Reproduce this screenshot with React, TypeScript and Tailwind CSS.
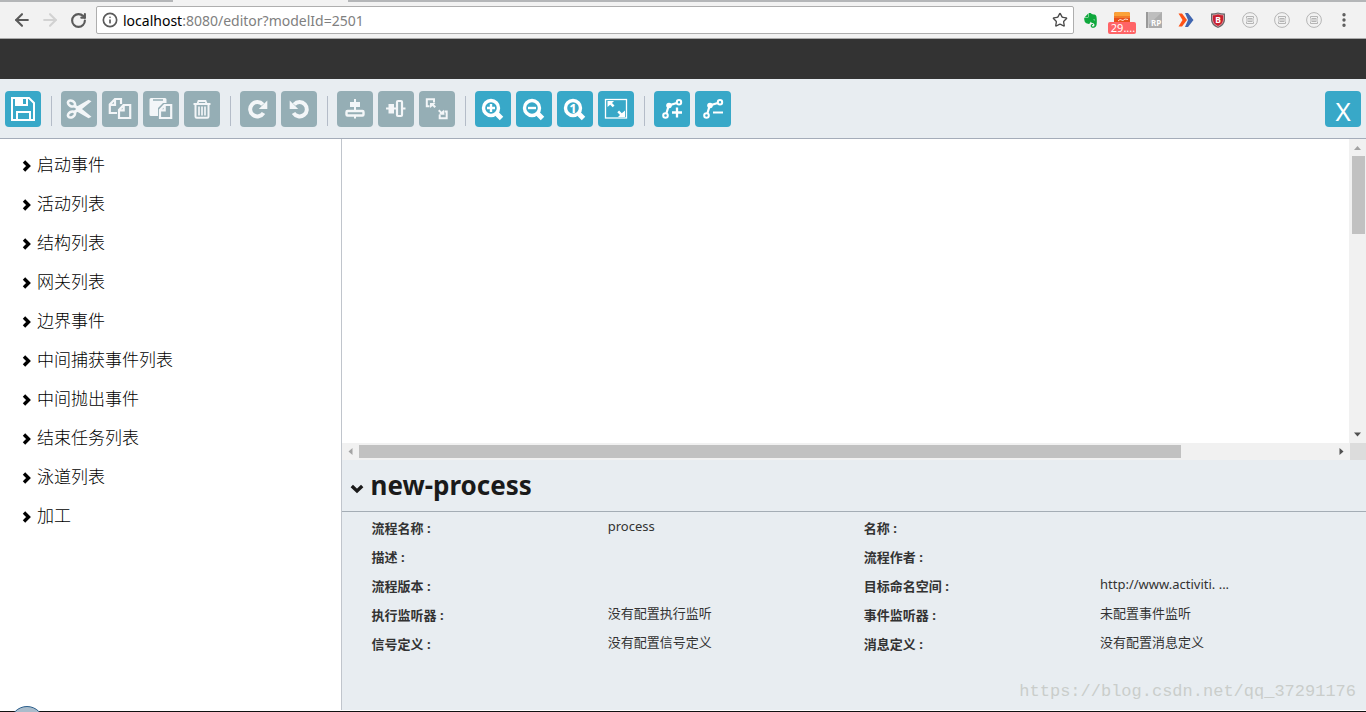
import React, { useState } from 'react';
import { FaEvernote } from 'react-icons/fa';
import { ArrowLeft, ArrowRight, Info, MoreVertical, RotateCw, Star } from 'lucide-react';

type Tool = {
  name: string;
  label: string;
  enabled?: boolean;
  icon: React.ReactNode;
};

type Property = {
  label: string;
  value: string;
};

const PALETTE = [
  '启动事件',
  '活动列表',
  '结构列表',
  '网关列表',
  '边界事件',
  '中间捕获事件列表',
  '中间抛出事件',
  '结束任务列表',
  '泳道列表',
  '加工',
];

const PROPERTIES: Property[] = [
  { label: '流程名称', value: 'process' },
  { label: '名称', value: '' },
  { label: '描述', value: '' },
  { label: '流程作者', value: '' },
  { label: '流程版本', value: '' },
  { label: '目标命名空间', value: 'http://www.activiti. ...' },
  { label: '执行监听器', value: '没有配置执行监听' },
  { label: '事件监听器', value: '未配置事件监听' },
  { label: '信号定义', value: '没有配置信号定义' },
  { label: '消息定义', value: '没有配置消息定义' },
];

const repeatIcon = (
  <>
    <path d="M23.5 22A7.2 7.200 0 1 1 22.800 13.500" strokeWidth="4" />
    <path d="M27.300 9.500v8.500h-8.500z" fill="currentColor" stroke="none" />
  </>
);

const magnifier = (
  <>
    <circle cx="16" cy="17" r="7.5" strokeWidth="3.4" />
    <path d="M21.5 22.5l5 5" strokeWidth="5" />
  </>
);

const bendLine = (
  <>
    <circle cx="11.5" cy="24.5" r="2.3" />
    <path d="M12.5 22l2.3-7.5 8-2.5" strokeWidth="2.2" />
    <circle cx="15" cy="14.5" r="2.8" fill="currentColor" stroke="none" />
    <circle cx="25" cy="11.3" r="2.2" />
  </>
);

// All glyphs are drawn on the 36px button grid
const TOOL_GROUPS: Tool[][] = [
  [
    {
      name: 'save',
      label: '保存',
      enabled: true,
      icon: (
        <>
          <path d="M7 7h17l5 5v17H7z" />
          <path d="M10 6h13v9H10zM18 8v5h3V8z" fill="currentColor" fillRule="evenodd" stroke="none" />
          <path d="M12 29v-8h13v8" />
        </>
      ),
    },
  ],
  [
    {
      name: 'cut',
      label: '剪切',
      icon: (
        <>
          <ellipse cx="10.5" cy="12.5" rx="3.8" ry="2.7" strokeWidth="2.6" transform="rotate(30 10.5 12.5)" />
          <ellipse cx="10.5" cy="23.5" rx="3.8" ry="2.7" strokeWidth="2.6" transform="rotate(-30 10.5 23.5)" />
          <path d="M13 14.500l5 3.500-5 3.500" strokeWidth="3" />
          <path d="M15 16L27.5 8.800l3 1.500L21 18l9.500 7.700-3 1.500L15 20z" fill="currentColor" stroke="none" />
        </>
      ),
    },
    {
      name: 'copy',
      label: '复制',
      icon: (
        <>
          <path d="M15 22H7.800v-8.500L13 8h6v5M7.800 13.800H13V8" strokeWidth="2.200" />
          <path d="M21.5 14h6.700v13H17v-8zM17 19.300h4.700V14" strokeWidth="2.200" />
        </>
      ),
    },
    {
      name: 'paste',
      label: '粘贴',
      icon: (
        <>
          <path
            d="M8 7h14a1.500 1.500 0 0 1 1.500 1.500V12H20l-5 5v8H8a1.500 1.500 0 0 1-1.500-1.500v-15A1.500 1.500 0 0 1 8 7zM10 8.200v1.600h10V8.200z"
            fill="currentColor"
            fillRule="evenodd"
            stroke="none"
          />
          <path d="M21.5 14h6.700v13H17v-8zM17 19.300h4.700V14" strokeWidth="2.200" />
        </>
      ),
    },
    {
      name: 'delete',
      label: '删除',
      icon: (
        <>
          <path d="M9.500 13h17M11.500 13v12.500a1.200 1.200 0 0 0 1.200 1.200h10.600a1.200 1.200 0 0 0 1.200-1.200V13" strokeWidth="2" />
          <path d="M13.500 12.500l1-2.500h7l1 2.500" strokeWidth="1.800" />
          <path d="M15 15.500v9M18 15.500v9M21 15.500v9" strokeWidth="1.700" />
        </>
      ),
    },
  ],
  [
    { name: 'redo', label: '重做', icon: repeatIcon },
    { name: 'undo', label: '撤销', icon: <g transform="matrix(-1 0 0 1 36 0)">{repeatIcon}</g> },
  ],
  [
    {
      name: 'align-vertical',
      label: '垂直对齐',
      icon: (
        <>
          <path d="M18 8v11M18 25v2.500" />
          <path d="M13 11h10v5H13z" fill="currentColor" stroke="none" />
          <rect x="9.500" y="20" width="17" height="4.500" rx="1" strokeWidth="2.400" />
        </>
      ),
    },
    {
      name: 'align-horizontal',
      label: '水平对齐',
      icon: (
        <>
          <path d="M8 17.500h10M25 17.500h2.500" />
          <path d="M10.500 13h5.500v9.500h-5.500z" fill="currentColor" stroke="none" />
          <rect x="19" y="10" width="5" height="15" rx="1" strokeWidth="2.200" />
        </>
      ),
    },
    {
      name: 'same-size',
      label: '相同大小',
      icon: (
        <>
          <path d="M10.500 15.300H7.800V8.300h7.200v3.200" strokeWidth="2" />
          <path d="M11 12h5.500l-1.500 1.500 2 2-1.500 1.500-2-2-2.500 2z" fill="currentColor" stroke="none" />
          <path d="M25.500 20.500h2.200v6.700h-7V24" strokeWidth="2" />
          <path d="M25.500 23.800h-6l1.700-1.700-2.200-2.200 1.400-1.400 2.200 2.200 2.200-2z" fill="currentColor" stroke="none" />
        </>
      ),
    },
  ],
  [
    {
      name: 'zoom-in',
      label: '放大',
      enabled: true,
      icon: (
        <>
          {magnifier}
          <path d="M12 17h8M16 13v8" strokeWidth="2.400" />
        </>
      ),
    },
    {
      name: 'zoom-out',
      label: '缩小',
      enabled: true,
      icon: (
        <>
          {magnifier}
          <path d="M12 17h8" strokeWidth="2.400" />
        </>
      ),
    },
    {
      name: 'zoom-actual',
      label: '实际大小',
      enabled: true,
      icon: (
        <>
          {magnifier}
          <text x="16" y="21.500" textAnchor="middle" fontSize="13" fontWeight="700" fill="currentColor" stroke="none">
            1
          </text>
        </>
      ),
    },
    {
      name: 'zoom-fit',
      label: '适合大小',
      enabled: true,
      icon: (
        <>
          <rect x="7.500" y="8.500" width="21" height="18.500" strokeWidth="1.300" />
          <path d="M9.500 10h6.500l-2 2 2.500 2.500-1.800 1.800-2.500-2.500-2.700 2.200z" fill="currentColor" stroke="none" />
          <path d="M27 26h-7l2-2-2.700-2.700 1.800-1.800 2.700 2.700L27 19.500z" fill="currentColor" stroke="none" />
        </>
      ),
    },
  ],
  [
    {
      name: 'bend-add',
      label: '添加弯曲点',
      enabled: true,
      icon: (
        <>
          {bendLine}
          <path d="M18 21.500h10M23 16.500v10" strokeWidth="2.300" />
        </>
      ),
    },
    {
      name: 'bend-remove',
      label: '移除弯曲点',
      enabled: true,
      icon: (
        <>
          {bendLine}
          <path d="M18 21.500h10" strokeWidth="2" />
        </>
      ),
    },
  ],
];

function ExtensionIcons() {
  return (
    <div className="flex items-center">
      <button type="button" aria-label="Evernote" className="flex w-8 justify-center">
        <FaEvernote className="size-[17px] text-[#0fa83c]" />
      </button>
      <button type="button" aria-label="Weather" className="relative flex h-7 w-8 justify-center">
        <svg viewBox="0 0 16 16" className="mt-1.5 size-4">
          <rect width="16" height="16" rx="2" fill="#e8501c" />
          <path d="M0 2a2 2 0 0 1 2-2h12a2 2 0 0 1 2 2v2H0z" fill="#fba238" />
          <path d="M0 4h16v2H0z" fill="#f27a28" />
          <path d="M4 9l2-1.500 3 1 2-1.500 3 .5" stroke="#ffe3d0" fill="none" />
        </svg>
        <span className="absolute top-4 left-0.5 h-3 w-7 rounded-xs bg-[#ff6467] pl-0.5 text-[11px] leading-3 text-white">
          29....
        </span>
      </button>
      <button type="button" aria-label="RP" className="flex w-8 justify-center">
        <svg viewBox="0 0 16 16" className="size-4">
          <path d="M0 0h2v16H0z" fill="#999" />
          <path d="M2.500 0H16v16H2.500z" fill="#adadad" />
          <path d="M2.500 0H16L2.500 13z" fill="#bebebe" />
          <text x="5" y="14" fontSize="8" fontWeight="700" fill="#fff">RP</text>
        </svg>
      </button>
      <button type="button" aria-label="Forward" className="flex w-8 justify-center">
        <svg viewBox="0 0 16 16" className="size-4">
          <path d="M7 1h3l5.500 7L10 15H7l3-7z" fill="#4166b0" />
          <path d="M.5 1.500H4L9 8l-5 6.500H.5L4.500 8z" fill="#ff5217" />
        </svg>
      </button>
      <button type="button" aria-label="Shield" className="flex w-8 justify-center">
        <svg viewBox="0 0 16 16" className="size-4">
          <path d="M1 1.500Q5 1.500 8 .5q3 1 7 1v6.500q0 5-7 8Q1 13 1 8z" fill="#68696c" />
          <path d="M2.500 3Q5 3 8 2q3 1 5.500 1v5q0 4-5.500 6.500Q2.500 12 2.500 8z" fill="#c8202f" stroke="#e9c5c8" strokeWidth=".6" />
          <text x="8" y="11" textAnchor="middle" fontSize="8.500" fontWeight="700" fill="#fff">B</text>
        </svg>
      </button>
      {[1, 2, 3].map((n) => (
        <button key={n} type="button" aria-label={`Extension ${n}`} className="flex w-8 justify-center">
          <svg viewBox="0 0 16 16" className="size-4" fill="none" stroke="#b5b5b5">
            <circle cx="8" cy="8" r="7.400" />
            <path d="M4.500 6.500V4.500h7v2M4.500 9.500v2h7v-2M4 8h8M5.500 6.500h5M5.500 9.500h5" />
          </svg>
        </button>
      ))}
      <button type="button" aria-label="Menu" className="flex w-7 justify-center">
        <MoreVertical className="size-[18px] text-[#5a5a5a]" strokeWidth={2.5} />
      </button>
    </div>
  );
}

function BrowserBar() {
  return (
    <header className="border-b border-[#a9a9a9] bg-[#f2f2f2]">
      <div className="flex h-0.5">
        <span className="w-[173px] bg-[#b4b6b8]" />
        <span className="w-[175px]" />
        <span className="flex-1 bg-[#b4b6b8]" />
      </div>
      <div className="flex h-9 items-center pr-2 pl-3">
        <div className="flex w-[84px] gap-2 text-[#5a5a5a]">
          <button type="button" aria-label="Back">
            <ArrowLeft className="size-5" strokeWidth={2.5} />
          </button>
          <button type="button" aria-label="Forward" disabled className="text-[#d2d2d2]">
            <ArrowRight className="size-5" strokeWidth={2.5} />
          </button>
          <button type="button" aria-label="Reload" className="flex size-5 items-center justify-center">
            <RotateCw className="size-[17px]" strokeWidth={3} />
          </button>
        </div>
        <div className="flex h-7 flex-1 items-center gap-[5px] rounded-xs border border-[#aeaeae] bg-white px-[5px]">
          <Info className="size-4 text-[#5a5a5a]" strokeWidth={2.5} />
          <span className="flex-1 text-[14px] text-[#808080]">
            <span className="text-black">localhost</span>:8080/editor?modelId=2501
          </span>
          <button type="button" aria-label="Bookmark">
            <Star className="size-4 text-[#4a4a4a]" />
          </button>
        </div>
        <ExtensionIcons />
      </div>
    </header>
  );
}

function Toolbar() {
  return (
    <div className="flex items-center justify-between border-b border-[#a4acb9] bg-[#e8edf1] px-[5px] pt-3 pb-[11px]">
      <div className="flex items-center">
        {TOOL_GROUPS.map((group, i) => (
          <React.Fragment key={i}>
            {i > 0 && <span className="mt-1 mr-[9px] ml-2.5 h-[30px] w-px bg-[#b4bcc8]" />}
            <div className="flex gap-[5px]">
              {group.map((tool) => (
                <button
                  key={tool.name}
                  type="button"
                  aria-label={tool.label}
                  disabled={!tool.enabled}
                  className={
                    tool.enabled
                      ? 'size-9 rounded bg-[#38a8c8] text-white'
                      : 'size-9 rounded bg-[#95aeb5] text-[#f3f6f8]'
                  }
                >
                  <svg viewBox="0 0 36 36" className="size-9" fill="none" stroke="currentColor" strokeWidth="2">
                    {tool.icon}
                  </svg>
                </button>
              ))}
            </div>
          </React.Fragment>
        ))}
      </div>
      <button type="button" className="size-9 rounded bg-[#38a8c8] pt-1 text-[26px] leading-8 text-white">
        X
      </button>
    </div>
  );
}

function Palette() {
  return (
    <nav className="w-1/4 shrink-0 border-r border-[#c0c5cc] bg-white pt-1.5">
      <ul>
        {PALETTE.map((item) => (
          <li key={item}>
            <button type="button" className="flex h-[39px] items-center gap-[5px] pl-[22px] text-[17px] font-light text-black">
              <svg viewBox="0 0 10 12" className="mt-0.5 h-3 w-2.5" fill="none" stroke="currentColor" strokeWidth="3.400">
                <path d="M2 1.500L6.500 6 2 10.500" />
              </svg>
              {item}
            </button>
          </li>
        ))}
      </ul>
    </nav>
  );
}

function Canvas() {
  return (
    <div className="flex min-h-0 flex-1 flex-col bg-white">
      <div className="flex flex-1 justify-end">
        <div className="flex w-[17px] flex-col items-end bg-[#f1f1f1] pr-px">
          <svg viewBox="0 0 15 17" className="h-[17px] w-[15px]">
            <path d="M4 11h7L7.500 7z" fill="#a3a3a3" />
          </svg>
          <div className="h-[78px] w-[13px] bg-[#c1c1c1]" />
          <svg viewBox="0 0 15 17" className="mt-auto h-[17px] w-[15px]">
            <path d="M4 6.500h7l-3.500 4z" fill="#505050" />
          </svg>
        </div>
      </div>
      <div className="flex h-[17px] items-center bg-[#f1f1f1]">
        <svg viewBox="0 0 17 17" className="size-[17px]">
          <path d="M10.500 5v7L6.500 8.500z" fill="#a3a3a3" />
        </svg>
        <div className="flex-1">
          <div className="h-[13px] w-27/32 bg-[#c1c1c1]" />
        </div>
        <svg viewBox="0 0 17 17" className="size-[17px]">
          <path d="M6.500 5v7l4-3.500z" fill="#505050" />
        </svg>
        <div className="h-full w-4 bg-[#dcdcdc]" />
      </div>
    </div>
  );
}

function Properties() {
  const [open, setOpen] = useState(true);

  return (
    <section className="h-[250px] bg-[#e8edf1]">
      <h2 className="border-b border-[#a4adb5]">
        <button
          type="button"
          onClick={() => setOpen(!open)}
          className="flex h-[51px] items-center gap-[7px] pl-2 text-[26px] font-bold text-[#1a1a1a]"
        >
          <svg viewBox="0 0 14 10" className="mt-1.5 h-2.5 w-3.5" fill="none" stroke="currentColor" strokeWidth="3.400">
            <path d="M1.800 2L7 7l5.200-5" />
          </svg>
          new-process
        </button>
      </h2>
      {open && (
        <dl className="grid grid-cols-2 pt-px pr-2.5 pl-[30px] text-[13px] text-[#333]">
          {PROPERTIES.map((p) => (
            <div key={p.label} className="flex h-[29px]">
              <dt className="w-[48%] pt-0.5 leading-[26px] font-bold">{p.label} :</dt>
              <dd className="leading-[26px]">{p.value}</dd>
            </div>
          ))}
        </dl>
      )}
    </section>
  );
}

export default function App() {
  return (
    <div className="relative flex h-screen flex-col overflow-hidden bg-white font-['Noto_Sans','Noto_Sans_CJK_SC',sans-serif]">
      <BrowserBar />
      <div className="h-10 shrink-0 bg-[#333]" />
      <Toolbar />
      <main className="flex min-h-0 flex-1">
        <Palette />
        <div className="flex min-w-0 flex-1 flex-col">
          <Canvas />
          <Properties />
        </div>
      </main>
      <footer className="mt-px h-px shrink-0 bg-[#111]" />
      <span className="absolute -bottom-7 left-2.5 size-[34px] rounded-full border border-[#2b5f8c] bg-[#a9bccb]" />
      <span className="absolute right-2.5 bottom-2 font-['Liberation_Mono',monospace] text-[17px] text-[#cacdcb]">
        https://blog.csdn.net/qq_37291176
      </span>
    </div>
  );
}
